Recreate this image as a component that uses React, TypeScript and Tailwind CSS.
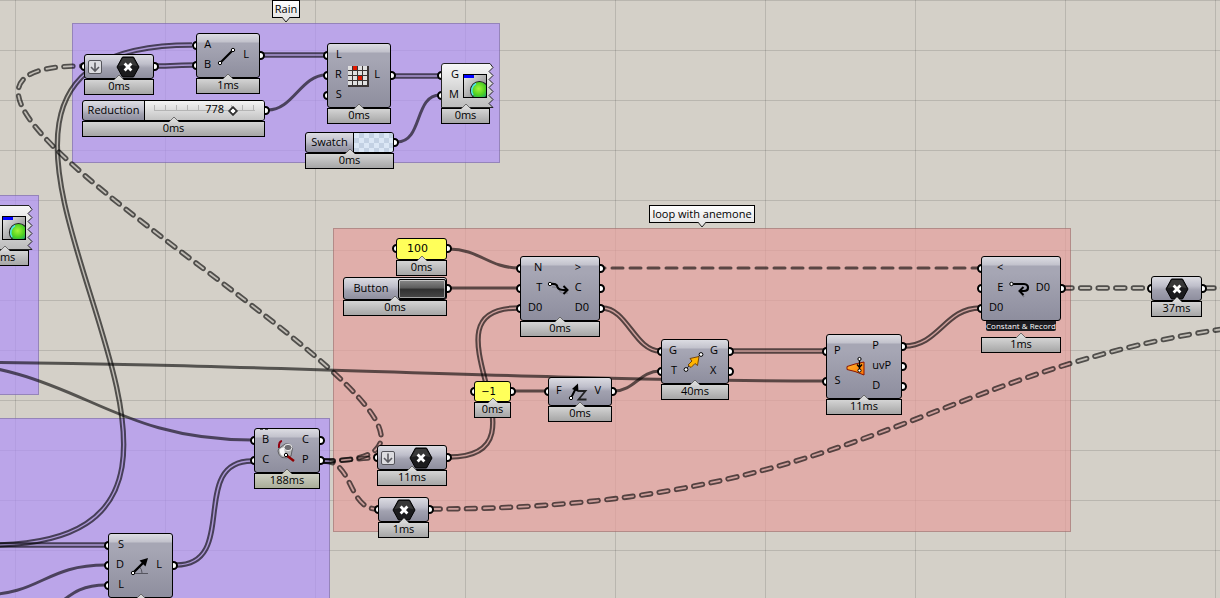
import { useState, type ReactNode } from "react";
import clsx from "clsx";

type Wire = {
  id: string;
  d: string;
  kind: "item" | "list" | "tree" | "empty";
};

const wires: Wire[] = [
  { id: "start-a", d: "M-11 545 C349 545 -168 45 192 45", kind: "list" },
  { id: "relay-b", d: "M157 66 C170 66 182 65 194 65", kind: "list" },
  { id: "line-l", d: "M263 55 L326 55", kind: "list" },
  { id: "reduction-r", d: "M268 110 C293 110 301 75 326 75", kind: "item" },
  { id: "grid-g", d: "M393 76 L440 76", kind: "list" },
  { id: "swatch-m", d: "M397 142 C423 142 414 95 440 95", kind: "item" },
  { id: "proj-relay", d: "M324 461 C596 461 -207 66 82 66", kind: "tree" },
  { id: "proj-loop", d: "M324 461 C342 461 357 458 375 458", kind: "tree" },
  { id: "proj-out", d: "M324 461 C353 461 348 509 377 509", kind: "tree" },
  { id: "src-b", d: "M-75 362 C75 362 102 440 252 440", kind: "item" },
  { id: "src-s", d: "M-75 362 C225 362 525 381 825 381", kind: "item" },
  { id: "start-s", d: "M-11 545 L106 545", kind: "list" },
  { id: "dir-d", d: "M-20 595 C42 595 44 565 106 565", kind: "item" },
  { id: "len-l", d: "M20 616 C66 616 60 585 106 585", kind: "item" },
  { id: "line-c", d: "M176 565 C240 565 188 461 252 461", kind: "list" },
  { id: "loop-d0", d: "M449 457 C559 457 414 308 518 308", kind: "list" },
  { id: "count-n", d: "M449 249 C479 249 489 268 519 268", kind: "item" },
  { id: "button-t", d: "M449 288 L519 288", kind: "item" },
  { id: "loop", d: "M602 268 L980 268", kind: "empty" },
  { id: "d0-g", d: "M602 308 C627 308 635 351 660 351", kind: "list" },
  { id: "neg-f", d: "M513 391 L547 391", kind: "item" },
  { id: "v-t", d: "M614 391 C634 391 640 371 660 371", kind: "item" },
  { id: "g-p", d: "M731 351 L825 351", kind: "list" },
  { id: "p-d0", d: "M904 346 C939 346 945 308 980 308", kind: "list" },
  { id: "d0-out", d: "M1063 288 L1150 288", kind: "tree" },
  { id: "out-next", d: "M1205 288 L1230 288", kind: "tree" },
  { id: "relay-next", d: "M431 509 C931 509 940 315 1430 315", kind: "tree" },
];

function Wires() {
  return (
    <svg className="absolute top-0 left-0 h-[700px] w-[1600px]" fill="none" aria-hidden="true">
      {wires.map((w) => {
        if (w.kind === "item" || w.kind === "empty") {
          return (
            <path
              key={w.id}
              d={w.d}
              stroke="#000"
              strokeOpacity=".6"
              strokeWidth="3"
              strokeLinecap={w.kind === "empty" ? "round" : "butt"}
              strokeDasharray={w.kind === "empty" ? "11 7" : undefined}
              strokeDashoffset={w.kind === "empty" ? 8 : 0}
            />
          );
        }
        const dashes = w.kind === "tree" ? "9 8.6" : undefined;
        const cap = w.kind === "tree" ? "round" : "butt";
        return (
          <g key={w.id}>
            <mask id={w.id} maskUnits="userSpaceOnUse" x="-100" y="-10" width="1700" height="720">
              <path d={w.d} stroke="#fff" strokeWidth="5.4" strokeLinecap={cap} strokeDasharray={dashes} />
              <path
                d={w.d}
                stroke="#222"
                strokeWidth={w.kind === "tree" ? 1.8 : 1.4}
                strokeLinecap={cap}
                strokeDasharray={dashes}
              />
            </mask>
            <path d={w.d} stroke="#000" strokeOpacity=".62" strokeWidth="7" strokeLinecap="round" mask={`url(#${w.id})`} />
          </g>
        );
      })}
    </svg>
  );
}

function Ports({ labels = [], side }: { labels?: string[]; side: "left" | "right" }) {
  return (
    <ul className="flex flex-col justify-around pt-px pb-[2px]">
      {labels.map((label, i) => (
        <li
          key={i}
          className={clsx(
            "relative flex h-5 items-center pb-[2px]",
            side === "left" && "justify-end",
            label && (side === "left" ? "pl-[7px]" : "pr-[10px]")
          )}
        >
          {label}
          <span
            className={clsx(
              "absolute inset-y-0 -z-10 my-auto size-[9px] rounded-full border-2 border-black bg-white",
              side === "left" ? "-left-[5px]" : "-right-[6px]"
            )}
          />
        </li>
      ))}
    </ul>
  );
}

function Timing({ value, tint }: { value: string; tint?: boolean }) {
  return (
    <div
      className={clsx(
        "relative flex h-4 items-center justify-center border border-black bg-linear-to-b pb-[2px]",
        tint ? "from-[#cfd0c4] to-[#a9ad98]" : "from-[#d4d4d4] to-[#a6a6a6]"
      )}
    >
      <svg className="absolute inset-x-0 bottom-full mx-auto h-[6px] w-3" viewBox="0 0 12 6">
        <path d="M1 6 L6 1 L11 6" fill={tint ? "#cfd0c4" : "#d8d8d8"} stroke="#555" strokeWidth=".8" />
      </svg>
      {value}
    </div>
  );
}

type NodeProps = {
  className: string;
  height: string;
  inputs?: string[];
  outputs?: string[];
  time: string;
  fill?: string;
  tint?: boolean;
  tag?: string;
  children?: ReactNode;
};

const TALL =
  "bg-[linear-gradient(to_bottom,#dcdce2_0px,#c2c2cc_8px,#a6a6b4_9px,#a6a6b4_25%,#8e8e9e_100%)]";
const SHORT =
  "bg-[linear-gradient(to_bottom,#dcdce2_0px,#bebeca_9px,#a2a2b0_13px,#8e8e9e_100%)]";

function Node({ className, height, inputs, outputs, time, fill = TALL, tint, tag, children }: NodeProps) {
  return (
    <section className={clsx("absolute isolate", className)}>
      <div className={clsx("flex rounded-[3px] border border-black", height, fill)}>
        <Ports labels={inputs} side="left" />
        <div className="flex min-w-0 flex-1 items-center justify-center">{children}</div>
        <Ports labels={outputs} side="right" />
      </div>
      {tag && (
        <div className="mx-[5px] mb-[6px] flex h-[10px] justify-center rounded-b-xs bg-[#1c1c20] text-[8px] leading-[9px] whitespace-nowrap text-white">
          {tag}
        </div>
      )}
      <Timing value={time} tint={tint} />
    </section>
  );
}

function Hex() {
  return (
    <svg className="h-[22px] w-6" viewBox="0 0 24 22">
      <path d="M6.5 1 H17.5 L23 11 L17.5 21 H6.5 L1 11 Z" fill="#1b1b1d" stroke="#000" />
      <path d="M7 2 H17 L21.5 10 Q12 8 2.5 10 Z" fill="#444" opacity=".7" />
      <path d="M8.6 7.6 L15.4 14.4 M15.4 7.6 L8.6 14.4" stroke="#fff" strokeWidth="2.8" />
    </svg>
  );
}

function Flatten() {
  return (
    <svg className="size-[14px]" viewBox="0 0 14 14" fill="none">
      <rect x=".5" y=".5" width="13" height="13" rx="1.5" fill="#dcdce0" stroke="#55555c" />
      <path d="M7 2.5 V10.5 M3 7 L7 11 L11 7" stroke="#5c5c62" strokeWidth="1.6" />
    </svg>
  );
}

function Relay() {
  return (
    <div className="flex w-full items-center justify-between pr-[13px] pl-[3px]">
      <Flatten />
      <Hex />
    </div>
  );
}

function LineIcon() {
  return (
    <svg className="size-6" viewBox="0 0 24 24">
      <path d="M5 19 L18 6" stroke="#000" strokeWidth="2.2" />
      <circle cx="5" cy="19" r="1.7" fill="#fff" stroke="#000" />
      <circle cx="18" cy="6" r="1.7" fill="#fff" stroke="#000" />
    </svg>
  );
}

function GridIcon() {
  const cells = Array.from({ length: 16 }, (_, i) => i);
  return (
    <svg className="size-6" viewBox="0 0 24 24">
      <rect x="2" y="2" width="21" height="21" fill="#3a3434" />
      {cells.map((i) => (
        <rect
          key={i}
          x={2 + (i % 4) * 5}
          y={2 + Math.floor(i / 4) * 5}
          width="4"
          height="4"
          fill={i === 1 || i === 10 ? "#e01800" : "#e0e0e0"}
        />
      ))}
    </svg>
  );
}

function PreviewIcon() {
  return (
    <svg className="size-6" viewBox="0 0 24 24">
      <defs>
        <linearGradient id="screen" x1="0" y1="0" x2="1" y2="1">
          <stop offset="0" stopColor="#eee" />
          <stop offset="1" stopColor="#777" />
        </linearGradient>
        <radialGradient id="ball" cx=".45" cy=".4" r=".6">
          <stop offset="0" stopColor="#a4f53a" />
          <stop offset=".6" stopColor="#4fd020" />
          <stop offset="1" stopColor="#1fa070" />
        </radialGradient>
        <clipPath id="frame">
          <rect x="1" y="1" width="22" height="22" />
        </clipPath>
      </defs>
      <rect x=".5" y=".5" width="23" height="23" fill="url(#screen)" stroke="#000" />
      <g clipPath="url(#frame)">
        <circle cx="16.5" cy="16.5" r="9" fill="url(#ball)" stroke="#222" strokeWidth="1.2" />
        <path d="M10 21 A8 8 0 0 1 13 9.5" fill="none" stroke="#4fe3e6" strokeWidth="1.6" />
      </g>
      <rect x="1" y="1" width="10" height="3" fill="#00f" />
    </svg>
  );
}

function PreviewNode({ className, inputs }: { className: string; inputs?: string[] }) {
  return (
    <section className={clsx("absolute isolate w-[49px]", className)}>
      <div className="relative flex h-[45px] border border-transparent">
        <svg className="absolute -top-px -left-px -z-[5] h-[45px] w-[53px] max-w-none" viewBox="0 0 53 45">
          <defs>
            <linearGradient id="paper" x1="0" y1="0" x2="0" y2="1">
              <stop offset="0" stopColor="#f8f8f8" />
              <stop offset="1" stopColor="#bcbcbc" />
            </linearGradient>
          </defs>
          <path
            d="M3 .5 H49 L52 4.5 L48 8.5 L52 12.5 L48 16.5 L52 20.5 L48 24.5 L52 28.5 L48 32.5 L52 36.5 L48 40.5 L52 44.5 H.5 V3 Q.5 .5 3 .5 Z"
            fill="url(#paper)"
            stroke="#222"
          />
        </svg>
        <Ports labels={inputs} side="left" />
        <div className="ml-auto flex items-center pr-[2px]">
          <PreviewIcon />
        </div>
      </div>
      <Timing value="0ms" />
    </section>
  );
}

function ProjectIcon() {
  return (
    <svg className="size-6" viewBox="0 0 24 24" fill="none">
      <path d="M8 2 Q4.5 2.500 5 9" stroke="#900010" strokeWidth="2" />
      <path d="M4 12 Q4 9 7 8 L11 5 Q17 4 18.500 9 L17 17 Q13 20 8 18.500 Q4 16 4 12 Z" fill="#b4b4b4" stroke="#4c4c50" strokeWidth=".8" />
      <path d="M5.500 10.500 Q8 8 10 8.500 L11.500 17.500 Q6 17.500 5.500 10.500 Z" fill="#f6f6f6" />
      <ellipse cx="14" cy="8.500" rx="4" ry="3.200" fill="#6e6e72" stroke="#f0f0f0" />
      <path d="M12 16 L20 22" stroke="#8f0000" strokeWidth="2.4" />
      <circle cx="12" cy="16" r="1.7" fill="#fff" stroke="#000" />
    </svg>
  );
}

function DirectionIcon() {
  return (
    <svg className="size-6" viewBox="0 0 24 24" fill="none">
      <path d="M5 19.500 H20 M14 19 Q14 15 11.500 13" stroke="#55555f" />
      <path d="M5 19 L15 9" stroke="#000" strokeWidth="2.4" />
      <path d="M20 4 L17.500 12.500 L11.500 6.500 Z" fill="#000" />
      <circle cx="5" cy="19" r="1.7" fill="#fff" stroke="#000" />
    </svg>
  );
}

function LoopStartIcon() {
  return (
    <svg className="h-5 w-6" viewBox="0 0 24 20" fill="none">
      <path d="M5 8 Q12 8 12.500 11 Q13 15 21 14" stroke="#6c6c76" strokeWidth="1.500" opacity=".5" />
      <path d="M3 5 Q10 4 10.500 8 Q11.500 11.500 20 11" stroke="#000" strokeWidth="2.200" />
      <path d="M16.500 7 L20.500 11 L16.500 15" stroke="#000" strokeWidth="2" />
      <circle cx="3" cy="5" r="1.7" fill="#fff" stroke="#000" />
    </svg>
  );
}

function LoopEndIcon() {
  return (
    <svg className="h-5 w-6" viewBox="0 0 24 20" fill="none">
      <path d="M13 14 L16 18" stroke="#66666e" strokeWidth="1.500" opacity=".6" />
      <path d="M4 5 H16 Q20 5.500 20 8.500 Q20 12 16 12 H12" stroke="#000" strokeWidth="2.2" />
      <path d="M15.500 8 L11.500 12 L15.500 16" stroke="#000" strokeWidth="2" />
      <circle cx="3.500" cy="5" r="1.7" fill="#fff" stroke="#000" />
    </svg>
  );
}

function UnitZIcon() {
  return (
    <svg className="h-5 w-6" viewBox="0 0 24 20" fill="none">
      <path d="M5 16 L10 6" stroke="#000" strokeWidth="2" />
      <path d="M12 1.500 L12.500 10 L6 7 Z" fill="#000" />
      <path d="M12 9 H19.500 L12.500 17.500 H20.500" stroke="#222" strokeWidth="1.800" />
      <circle cx="5" cy="16" r="1.7" fill="#fff" stroke="#000" />
    </svg>
  );
}

function MoveIcon() {
  return (
    <svg className="size-6" viewBox="0 0 24 24">
      <path d="M4 19 L19 4" stroke="#333" />
      <path d="M6 15 L10 11 L8 8.500 L17 6.500 L15.500 15.500 L13 13.500 L9 17.500 Z" fill="#ffb400" stroke="#6a3a00" strokeWidth=".9" />
      <circle cx="4" cy="19.500" r="1.900" fill="#fff" stroke="#000" />
      <circle cx="19" cy="4.500" r="1.900" fill="#fff" stroke="#000" />
    </svg>
  );
}

function ClosestPointIcon() {
  return (
    <svg className="size-6" viewBox="0 0 24 24">
      <defs>
        <linearGradient id="surface" x1="0" y1="0" x2="1" y2="1">
          <stop offset="0" stopColor="#ffb830" />
          <stop offset="1" stopColor="#ff7400" />
        </linearGradient>
      </defs>
      <path d="M3 11.500 L11 9 L20 7 V20 L11 16.500 L3 14.500 Z" fill="url(#surface)" stroke="#8a1500" />
      <path d="M15.500 5 V15 M13 9.500 L15.500 12.500 L18 9.500" fill="none" stroke="#000" strokeWidth="1.300" />
      <circle cx="15.500" cy="4" r="1.600" fill="#fff" stroke="#000" />
      <circle cx="15.500" cy="15.500" r="1.600" fill="#fff" stroke="#000" />
    </svg>
  );
}

// a coloured group, with its scribble hanging over the top edge
function Group({ className, title }: { className: string; title?: string }) {
  return (
    <div className={clsx("absolute flex items-start justify-center border border-black/20", className)}>
      {title && (
        <h2 className="relative -mt-6 flex h-[18px] items-center border border-black bg-linear-to-b from-white to-[#e6e6e6] px-[2px] pb-px whitespace-nowrap">
          {title}
          <svg className="absolute inset-x-0 top-full mx-auto h-[6px] w-3" viewBox="0 1 12 6">
            <path d="M1 0 L6 6 L11 0" fill="#e6e6e6" stroke="#222" />
          </svg>
        </h2>
      )}
    </div>
  );
}

function SliderNode() {
  const [value, setValue] = useState(778);
  return (
    <Node className="top-[100px] left-[82px] w-[183px]" height="h-[21px]" outputs={[""]} time="0ms" fill={SHORT}>
      <label htmlFor="reduction" className="w-[61px] pb-[2px] text-center">
        Reduction
      </label>
      <div className="relative h-full flex-1 rounded-r-xs border-l border-black bg-linear-to-b from-[#f4f4f4] to-[#c4c4c4] px-[6px]">
        <div className="absolute inset-x-[9px] top-1 h-[6px] border-b border-[#b4b4b4] bg-[repeating-linear-gradient(to_right,#b4b4b4_0px,#b4b4b4_1px,transparent_1px,transparent_11px)]" />
        <input
          id="reduction"
          type="range"
          min="0"
          max="1000"
          value={value}
          onChange={(e) => setValue(Number(e.target.value))}
          className="relative block h-[19px] w-full appearance-none bg-transparent [&::-webkit-slider-thumb]:size-[6px] [&::-webkit-slider-thumb]:rotate-45 [&::-webkit-slider-thumb]:appearance-none [&::-webkit-slider-thumb]:border [&::-webkit-slider-thumb]:border-black [&::-webkit-slider-thumb]:bg-white [&::-webkit-slider-thumb]:ring-[0.5px] [&::-webkit-slider-thumb]:ring-black"
        />
        <output htmlFor="reduction" className="absolute top-px right-10">
          {value}
        </output>
      </div>
    </Node>
  );
}

export default function App() {
  return (
    <main className="relative h-screen w-full overflow-hidden bg-[#d4d0c8] bg-[linear-gradient(to_right,#00000020_1px,transparent_1px),linear-gradient(to_bottom,#00000020_1px,transparent_1px)] bg-[length:150px_50px] bg-[position:15px_0px] font-['Open_Sans',sans-serif] text-[11px] leading-[14px] text-black">
      <Group className="top-[23px] left-[72px] h-[140px] w-[428px] bg-[#b093f6]/70" title="Rain" />
      <Group className="top-[195px] -left-10 h-[200px] w-[79px] bg-[#b093f6]/70" />
      <Group className="top-[418px] -left-10 h-[220px] w-[370px] bg-[#b093f6]/70" />
      <Group className="top-[228px] left-[333px] h-[304px] w-[738px] bg-[#e59f9d]/70" title="loop with anemone" />

      <Wires />

      {/* rain */}
      <Node className="top-[54px] left-[84px] w-[70px]" height="h-[25px]" inputs={[""]} outputs={[""]} time="0ms" fill={SHORT}>
        <Relay />
      </Node>
      <Node className="top-[33px] left-[196px] w-16" height="h-[45px]" inputs={["A", "B"]} outputs={["L"]} time="1ms">
        <LineIcon />
      </Node>
      <SliderNode />
      <Node className="top-[43px] left-[327px] w-16" height="h-[65px]" inputs={["L", "R", "S"]} outputs={["L"]} time="0ms">
        <GridIcon />
      </Node>
      <PreviewNode className="top-[63px] left-[441px]" inputs={["G", "M"]} />
      <Node className="top-[132px] left-[305px] w-[89px]" height="h-[21px]" outputs={[""]} time="0ms" fill={SHORT}>
        <span className="w-[47px] pb-[2px] text-center">Swatch</span>
        <span className="h-full flex-1 rounded-r-xs border-l border-black bg-[conic-gradient(#c3d1e3_25%,#dbe7f5_25%_50%,#c3d1e3_50%_75%,#dbe7f5_75%)] bg-[length:10px_10px]" />
      </Node>

      <PreviewNode className="top-[205px] -left-5" />

      {/* projection */}
      <Node className="top-[428px] left-[254px] w-[66px]" height="h-[45px]" inputs={["B", "C"]} outputs={["C", "P"]} time="188ms" tint>
        <span className="absolute top-px left-[6px] w-2 border-t border-dashed border-[#55555c]" />
        <ProjectIcon />
      </Node>
      <Node className="top-[533px] left-[108px] w-[65px]" height="h-[65px]" inputs={["S", "D", "L"]} outputs={["L"]} time="">
        <DirectionIcon />
      </Node>

      {/* loop */}
      <Node className="top-[238px] left-[396px] w-[51px]" height="h-[22px]" inputs={[""]} outputs={[""]} time="0ms" fill="bg-[#ffff5a]">
        <span className="pr-2 font-['DejaVu_Sans',sans-serif]">100</span>
      </Node>
      <Node className="top-[277px] left-[343px] w-[104px]" height="h-[23px]" outputs={[""]} time="0ms" fill={SHORT}>
        <label htmlFor="trigger" className="flex-1 pb-[2px] text-center">
          Button
        </label>
        <button
          id="trigger"
          type="button"
          className="h-5 w-12 rounded-xs border border-black bg-[linear-gradient(to_bottom,#8a8a8a,#5c5c5c_45%,#303030_50%,#484848)] ring-1 ring-white/50 ring-inset"
        />
      </Node>
      <Node className="top-[256px] left-[520px] w-20" height="h-[65px]" inputs={["N", "T", "D0"]} outputs={[">", "C", "D0"]} time="0ms">
        <LoopStartIcon />
      </Node>
      <Node className="top-[381px] left-[474px] w-[37px]" height="h-[21px]" inputs={[""]} outputs={[""]} time="0ms" fill="bg-[#ffff5a]">
        <span className="pr-2 font-['DejaVu_Sans',sans-serif] text-[10px]">−1</span>
      </Node>
      <Node className="top-[377px] left-[548px] w-16" height="h-[29px]" inputs={["F"]} outputs={["V"]} time="0ms" fill={SHORT}>
        <UnitZIcon />
      </Node>
      <Node className="top-[445px] left-[377px] w-[70px]" height="h-[25px]" inputs={[""]} outputs={[""]} time="11ms" fill={SHORT}>
        <Relay />
      </Node>
      <Node className="top-[497px] left-[378px] w-[51px]" height="h-[25px]" inputs={[""]} outputs={[""]} time="1ms" fill={SHORT}>
        <Hex />
      </Node>
      <Node className="top-[339px] left-[661px] w-[68px]" height="h-[45px]" inputs={["G", "T"]} outputs={["G", "X"]} time="40ms">
        <MoveIcon />
      </Node>
      <Node className="top-[334px] left-[826px] w-[76px]" height="h-[65px]" inputs={["P", "S"]} outputs={["P", "uvP", "D"]} time="11ms">
        <ClosestPointIcon />
      </Node>
      <Node
        className="top-[256px] left-[981px] w-20"
        height="h-[65px]"
        inputs={["<", "E", "D0"]}
        outputs={["D0"]}
        time="1ms"
        tag="Constant & Record"
      >
        <LoopEndIcon />
      </Node>
      <Node className="top-[276px] left-[1151px] w-[51px]" height="h-[25px]" inputs={[""]} outputs={[""]} time="37ms" fill={SHORT}>
        <Hex />
      </Node>
    </main>
  );
}
